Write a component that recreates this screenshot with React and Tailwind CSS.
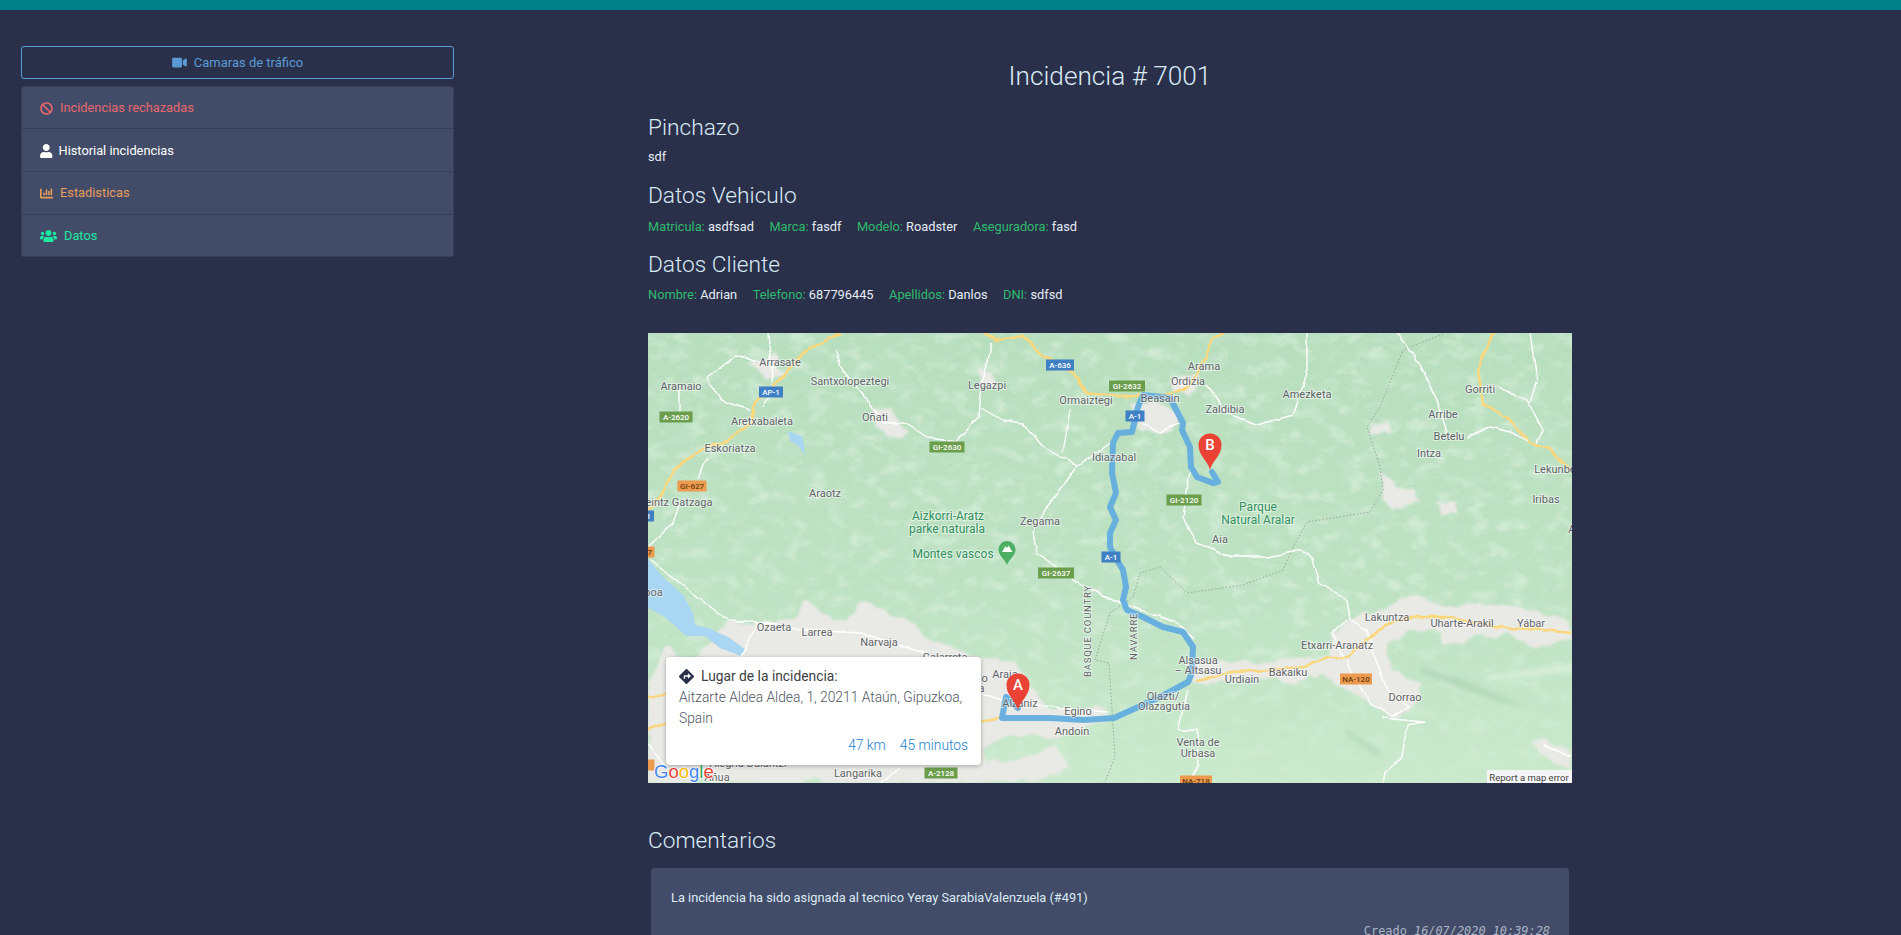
import { FaVideo, FaBan, FaUser, FaChartBar, FaUsers, FaDirections } from 'react-icons/fa';

const yellow = [
  [[192, 0], [155, 20], [132, 47], [105, 70], [105, 87], [79, 109], [52, 117], [29, 134], [12, 164], [0, 177]],
  [[335, 0], [349, 7], [375, 3], [392, 20], [425, 39], [437, 60], [459, 62], [485, 62], [522, 62], [542, 52], [552, 37], [565, 7], [577, 0]],
  [[845, 0], [830, 37], [835, 70], [859, 85], [882, 110], [902, 115], [919, 134], [924, 137]],
  [[924, 300], [895, 297], [845, 294], [799, 284], [762, 284], [735, 294], [719, 307], [699, 324], [679, 324], [655, 334], [620, 337], [589, 339], [549, 347]],
  [[353, 384], [333, 390]],
  [[0, 395], [18, 390]],
  [[0, 364], [18, 362]],
];

const white = [
  [[60, 44], [89, 22], [112, 30], [127, 34]],
  [[60, 44], [72, 67], [102, 77]],
  [[32, 57], [32, 84]],
  [[120, 0], [125, 57], [115, 74]],
  [[187, 17], [192, 34], [219, 67], [235, 90], [255, 90], [282, 105], [309, 109], [330, 84], [332, 60], [344, 10]],
  [[332, 75], [355, 87], [375, 90], [395, 114], [429, 132], [442, 125], [469, 105]],
  [[422, 77], [415, 120]],
  [[429, 132], [399, 174], [385, 200], [389, 220], [429, 249], [440, 255], [472, 270]],
  [[59, 124], [50, 147]],
  [[32, 170], [25, 190], [0, 214]],
  [[27, 247], [57, 270], [80, 287], [110, 289], [153, 297], [213, 300], [267, 317], [280, 322]],
  [[2, 227], [27, 247]],
  [[110, 289], [100, 310], [93, 324]],
  [[333, 360], [353, 367], [413, 375], [460, 379]],
  [[233, 450], [253, 434]],
  [[0, 410], [17, 434]],
  [[542, 137], [535, 184], [549, 210], [585, 224], [619, 224], [655, 217], [665, 227], [672, 250], [699, 267], [702, 287], [719, 297], [725, 320], [740, 357], [762, 375], [745, 382], [725, 372], [709, 350], [699, 327]],
  [[495, 90], [512, 100], [532, 90]],
  [[559, 52], [579, 80], [609, 92], [645, 82], [659, 40], [659, 0]],
  [[749, 0], [765, 20], [789, 67], [799, 100]],
  [[819, 104], [842, 94], [865, 100], [882, 110]],
  [[849, 54], [879, 67], [895, 97], [889, 110]],
  [[882, 0], [889, 47], [882, 70]],
  [[532, 397], [549, 397], [550, 434], [540, 450]],
  [[540, 357], [530, 397]],
  [[734, 385], [777, 389], [759, 392], [754, 424], [737, 440], [735, 450]],
  [[699, 287], [684, 300], [695, 324]],
  [[895, 412], [924, 424]],
  [[472, 270], [530, 290], [545, 307]],
];

const border = [[795, 1], [755, 17], [732, 74], [719, 94], [732, 134], [735, 157], [722, 179], [659, 189], [645, 214], [635, 237], [595, 252], [539, 260], [512, 234], [492, 240], [485, 264], [462, 280], [447, 327], [461, 330], [467, 424], [457, 449]];

const route = [[370, 375], [358, 364], [354, 385], [402, 385], [436, 387], [466, 385], [488, 375], [516, 362], [540, 349], [544, 340], [545, 314], [535, 299], [515, 294], [495, 284], [479, 277], [475, 267], [478, 254], [475, 237], [469, 227], [462, 214], [462, 200], [468, 187], [462, 174], [468, 160], [464, 140], [465, 110], [470, 100], [484, 99], [490, 74], [495, 62], [522, 65], [535, 90], [534, 97], [542, 114], [543, 134], [549, 144], [565, 150], [570, 149], [564, 139]];

const towns = [
  ['Arrasate', 132, 29], ['Aramaio', 33, 53], ['Santxolopeztegi', 202, 48], ['Legazpi', 339, 52], ['Ormaiztegi', 438, 67],
  ['Aretxabaleta', 114, 88], ['Oñati', 227, 84], ['Eskoriatza', 82, 115], ['Idiazabal', 466, 124], ['Araotz', 177, 160],
  ['Zegama', 392, 188], ['Ozaeta', 126, 294], ['Larrea', 169, 299], ['Narvaja', 231, 309], ['Arama', 556, 33],
  ['Ordizia', 540, 48], ['Beasain', 512, 65], ['Zaldibia', 577, 76], ['Amezketa', 659, 61], ['Gorriti', 832, 56],
  ['Arribe', 795, 81], ['Betelu', 801, 103], ['Intza', 781, 120], ['Iribas', 898, 166], ['Aia', 572, 206],
  ['Lakuntza', 739, 284], ['Uharte-Arakil', 814, 290], ['Yábar', 883, 290], ['Etxarri-Aranatz', 689, 312],
  ['Alsasua', 550, 327], ['– Altsasu', 550, 337], ['Bakaiku', 640, 339], ['Urdiain', 594, 346], ['Dorrao', 757, 364],
  ['Olazti/', 515, 363], ['Olazagutía', 516, 373], ['Egino', 430, 378], ['Andoin', 424, 398], ['Venta de', 550, 409],
  ['Urbasa', 550, 420], ['Langarika', 210, 440], ['Añua', 69, 444], ['Alegría-Dulantzi', 100, 430], ['Lekunberri', 912, 136], ['Aldaz', 934, 196],
  ['Leintz Gatzaga', 28, 169], ['Gamboa', -6, 259], ['Araia', 357, 341], ['Alzaniz', 372, 370], ['Galarreta', 297, 324], ['Ilardo', 326, 345], ['Egileta', 320, 355],
];

const parks = [
  ['Aizkorri-Aratz', 300, 183], ['parke naturala', 299, 196], ['Montes vascos', 305, 221],
  ['Parque', 610, 174], ['Natural Aralar', 610, 187],
];

const shields = [
  ['AP-1', 123, 59, 24, '#3f7fc4'], ['A-2620', 28, 84, 33, '#6b9e4c'], ['GI-627', 44, 153, 29, '#ec9a4e'],
  ['A-636', 412, 32, 28, '#3f7fc4'], ['GI-2630', 299, 114, 35, '#6b9e4c'], ['GI-2637', 408, 240, 36, '#6b9e4c'],
  ['A-1', 463, 224, 19, '#3f7fc4'], ['GI-2632', 479, 53, 36, '#6b9e4c'], ['A-1', 487, 83, 19, '#3f7fc4'],
  ['GI-2120', 536, 167, 35, '#6b9e4c'], ['NA-120', 708, 346, 32, '#ec9a4e'], ['NA-718', 548, 448, 32, '#ec9a4e'],
  ['A-2128', 293, 440, 33, '#6b9e4c'], ['AP-1', -6, 183, 24, '#3f7fc4'], ['GI-627', -8, 219, 29, '#ec9a4e'], ['GI-2', -8, 432, 29, '#ec9a4e'],
];

const toPoints = (line) => line.map((p) => p.join(',')).join(' ');

const Pin = ({ x, y, letter }) => (
  <g transform={`translate(${x} ${y})`}>
    <path d="M0 0C-2-9-11.5-14-11.5-25A11.5 11.5 0 1 1 11.5-25C11.5-14 2-9 0 0Z" fill="#ea4335" />
    <text x="0" y="-25" fill="#fff" fontSize="15" fontWeight="500" textAnchor="middle" dominantBaseline="central">{letter}</text>
  </g>
);

const RouteMap = () => (
  <svg width="924" height="450" viewBox="0 0 924 450" className="block" style={{ fontFamily: 'Roboto, sans-serif' }}>
    <defs>
      <filter id="shade" x="0" y="0" width="100%" height="100%">
        <feTurbulence type="fractalNoise" baseFrequency="0.045 0.08" numOctaves="5" seed="11" />
        <feColorMatrix values="0 0 0 0 0.55  0 0 0 0 0.77  0 0 0 0 0.6  4 0 0 0 -1.9" />
        <feGaussianBlur stdDeviation="0.5" />
      </filter>
      <filter id="glow" x="0" y="0" width="100%" height="100%">
        <feTurbulence type="fractalNoise" baseFrequency="0.05 0.07" numOctaves="4" seed="23" />
        <feColorMatrix values="0 0 0 0 0.8  0 0 0 0 0.92  0 0 0 0 0.81  0 3 0 0 -1.5" />
        <feGaussianBlur stdDeviation="0.6" />
      </filter>
      <filter id="rough" x="0" y="0" width="924" height="450" filterUnits="userSpaceOnUse">
        <feTurbulence type="fractalNoise" baseFrequency="0.07" numOctaves="2" seed="4" />
        <feDisplacementMap in="SourceGraphic" scale="5" xChannelSelector="R" yChannelSelector="G" />
        <feGaussianBlur stdDeviation="0.35" />
      </filter>
      <filter id="blotch" x="0" y="0" width="924" height="450" filterUnits="userSpaceOnUse">
        <feTurbulence type="fractalNoise" baseFrequency="0.05" numOctaves="3" seed="9" />
        <feDisplacementMap in="SourceGraphic" scale="14" xChannelSelector="R" yChannelSelector="G" />
        <feGaussianBlur stdDeviation="0.8" />
      </filter>
      <filter id="soft"><feGaussianBlur stdDeviation="2.5" /></filter>
      <linearGradient id="land" x1="0" y1="0" x2="0" y2="1">
        <stop offset="0" stopColor="#b7debd" />
        <stop offset="0.55" stopColor="#bde2c2" />
        <stop offset="1" stopColor="#cbeacd" />
      </linearGradient>
      <linearGradient id="fade" x1="0" y1="0" x2="0" y2="1">
        <stop offset="0" stopColor="#fff" />
        <stop offset="0.6" stopColor="#fff" />
        <stop offset="1" stopColor="#444" />
      </linearGradient>
      <mask id="relief" maskUnits="userSpaceOnUse" x="0" y="0" width="924" height="450">
        <rect width="924" height="450" fill="url(#fade)" />
      </mask>
    </defs>
    <rect width="924" height="450" fill="url(#land)" />
    <g mask="url(#relief)">
      <rect width="924" height="450" filter="url(#shade)" opacity="0.5" />
      <rect width="924" height="450" filter="url(#glow)" opacity="0.45" />
    </g>
    <g fill="#e9e9e5" filter="url(#blotch)">
      <path d="M80 290L110 289L147 290L157 267L173 280L197 290L217 270L240 280L263 290L280 304L317 320L333 327L363 327L390 360L400 374L447 377L460 380L460 390L403 404L350 404L333 414L340 434L407 414L420 434L383 447L317 450H0V347L17 314L43 327Z" />
      <path d="M542 330L575 329L649 325L682 324L685 300L699 287L749 270L762 260L785 270L825 272L859 270L924 290V305L885 314L859 299L815 307L799 314L792 299L762 297L739 307L739 324L745 337L772 350L772 360L762 377L745 384L719 367L692 354L672 340L645 350L622 347L565 350L542 350Z" />
      <path d="M732 140L745 150L765 158L772 172L745 175L735 168Z" />
      <path d="M790 168L805 172L810 185L795 180Z" />
      <path d="M725 92L738 88L742 100L722 102Z" />
      <path d="M100 30L125 22L138 40L120 50Z" />
      <path d="M222 75L245 78L262 100L240 105L228 92Z" />
      <path d="M328 35L345 40L350 55L335 52Z" />
      <path d="M510 70L485 72L492 96L520 100L535 85Z" />
      <path d="M524 45L552 40L545 60L525 60Z" />
      <path d="M885 407L900 405L924 420V436L900 430Z" />
    </g>
    <g fill="#a8d6f3">
      <path d="M0 226L15 244L35 262L45 280L47 292L60 295L80 304L98 317L93 323L72 315L57 303L38 303L17 284L0 275Z" />
      <path d="M140 98L155 104L157 122L150 112L142 108Z" />
    </g>
    <g fill="none" filter="url(#soft)" strokeLinecap="round">
      <path d="M775 337L855 367" stroke="#aed4b6" strokeWidth="5" />
      <path d="M805 345L870 372" stroke="#b3d8ba" strokeWidth="3" />
      <path d="M700 400L730 420" stroke="#b8dcbf" strokeWidth="6" />
      <path d="M840 345L924 335" stroke="#dcefdc" strokeWidth="5" />
    </g>
    <polyline points={toPoints(border)} fill="none" stroke="#9aa6a0" strokeWidth="1" strokeDasharray="1.5 2" />
    <g filter="url(#rough)" fill="none" strokeLinejoin="round">
      {white.map((line, i) => (
        <polyline key={i} points={toPoints(line)} stroke="#fff" strokeWidth="1.4" />
      ))}
      {yellow.map((line, i) => (
        <polyline key={i} points={toPoints(line)} stroke="#fbd77e" strokeWidth="2.6" />
      ))}
    </g>
    <polyline points={toPoints(route)} fill="none" stroke="#5fabe0" strokeWidth="6" strokeLinejoin="round" strokeLinecap="round" opacity="0.92" />
    <g fontSize="11" fill="#5f6368" stroke="#fff" strokeWidth="2" strokeOpacity="0.55" textAnchor="middle" dominantBaseline="central" style={{ paintOrder: 'stroke' }}>
      {towns.map(([t, x, y]) => <text key={t} x={x} y={y}>{t}</text>)}
      <text x="439" y="344" fontSize="9.5" letterSpacing="0.8" transform="rotate(-90 439 344)" textAnchor="start">BASQUE COUNTRY</text>
      <text x="485" y="327" fontSize="9.5" letterSpacing="0.8" transform="rotate(-90 485 327)" textAnchor="start">NAVARRE</text>
    </g>
    <g fontSize="12" fill="#2f8f5b" stroke="#fff" strokeWidth="2" strokeOpacity="0.5" textAnchor="middle" dominantBaseline="central" style={{ paintOrder: 'stroke' }}>
      {parks.map(([t, x, y]) => <text key={t} x={x} y={y}>{t}</text>)}
    </g>
    {shields.map(([t, x, y, w, c]) => (
      <g key={t + x}>
        <rect x={x - w / 2} y={y - 5.5} width={w} height="11" fill={c} />
        <text x={x} y={y} fontSize="8" fontWeight="500" fill={c === '#ec9a4e' ? '#6b3d12' : '#fff'} textAnchor="middle" dominantBaseline="central">{t}</text>
      </g>
    ))}
    <g transform="translate(359 232)">
      <path d="M0 0C-2-6-8.5-9-8.5-15.5A8.5 8.5 0 1 1 8.5-15.5C8.5-9 2-6 0 0Z" fill="#4caf63" />
      <path d="M-5-13L-1.5-19L0-17L1.5-19.5L5.5-13Z" fill="#fff" />
    </g>
    <Pin x={370} y={377} letter="A" />
    <Pin x={562} y={137} letter="B" />
    <text x="6" y="438" fontSize="18.5" fontWeight="400" stroke="#fff" strokeWidth="1.5" dominantBaseline="central" style={{ fontFamily: '"Liberation Sans", sans-serif', paintOrder: 'stroke' }}>
      <tspan fill="#4285f4">G</tspan><tspan fill="#ea4335">o</tspan><tspan fill="#fbbc05">o</tspan><tspan fill="#4285f4">g</tspan><tspan fill="#34a853">l</tspan><tspan fill="#ea4335">e</tspan>
    </text>
    <rect x="839" y="437" width="85" height="13" fill="#f5f5f5" />
    <text x="881" y="444" fontSize="9.5" fill="#444" textAnchor="middle" dominantBaseline="central">Report a map error</text>
  </svg>
);

const menu = [
  { icon: FaBan, label: 'Incidencias rechazadas', color: 'text-[#e8686c]', size: 'h-[13px] w-[13px]', row: 'h-[41px] gap-[7px] pt-[1px]' },
  { icon: FaUser, label: 'Historial incidencias', color: 'text-white', size: 'h-[14px] w-[12.5px]', row: 'h-[43px] gap-[6px] border-t border-[#383f5b] pt-[1px]' },
  { icon: FaChartBar, label: 'Estadisticas', color: 'text-[#e99b5c]', size: 'h-[13px] w-[13px]', row: 'h-[43px] gap-[7px] border-t border-[#383f5b]' },
  { icon: FaUsers, label: 'Datos', color: 'text-[#1de9a0]', size: 'h-[14px] w-[17px]', row: 'h-[42px] gap-[7px] border-t border-[#383f5b]' },
];

const Field = ({ name, value }) => (
  <span className="mr-[15.5px]"><span className="text-[#2fbb6d]">{name}:</span> <span className="text-[#e6edf5]">{value}</span></span>
);

export default function App() {
  return (
    <div className="h-[935px] overflow-hidden bg-[#2a304a] text-[12.8px] text-[#e6edf5]" style={{ fontFamily: 'Roboto, sans-serif' }}>
      <div className="h-[10px] bg-[#008088]" />
      <div className="flex">
        <aside className="w-[648px] shrink-0 pl-[21px] pr-[194px] pt-[36px]">
          <button className="flex h-[33px] w-full items-center justify-center gap-[7px] rounded-[3px] border border-[#5b9bd5] text-[13px] text-[#5b9bd5]">
            <FaVideo className="h-[13px] w-[15px]" />
            <span>Camaras de tráfico</span>
          </button>
          <div className="mt-[7px] overflow-hidden rounded-[3px] border border-[#383f59] bg-[#424c68]">
            {menu.map((item) => {
              const Icon = item.icon;
              return (
                <div key={item.label} className={`flex items-center px-[18px] ${item.row} ${item.color}`}>
                  <Icon className={item.size} />
                  <span>{item.label}</span>
                </div>
              );
            })}
          </div>
        </aside>
        <main className="w-[924px] shrink-0">
          <h1 className="mt-[49px] text-center text-[26.2px] leading-[34px] font-light text-[#d9eaf5]">Incidencia # 7001</h1>
          <h2 className="mt-[20px] text-[22.7px] leading-[29px] font-light text-[#d9eaf5]">Pinchazo</h2>
          <p className="mt-[5px] leading-[20px]">sdf</p>
          <h2 className="mt-[14px] text-[22.7px] leading-[29px] font-light text-[#d9eaf5]">Datos Vehiculo</h2>
          <p className="mt-[7px] leading-[20px]">
            <Field name="Matricula" value="asdfsad" />
            <Field name="Marca" value="fasdf" />
            <Field name="Modelo" value="Roadster" />
            <Field name="Aseguradora" value="fasd" />
          </p>
          <h2 className="mt-[13px] text-[22.7px] leading-[29px] font-light text-[#d9eaf5]">Datos Cliente</h2>
          <p className="mt-[6px] leading-[20px]">
            <Field name="Nombre" value="Adrian" />
            <Field name="Telefono" value="687796445" />
            <Field name="Apellidos" value="Danlos" />
            <Field name="DNI" value="sdfsd" />
          </p>
          <div className="relative mt-[28px] h-[450px] w-[924px] overflow-hidden">
            <RouteMap />
            <div className="absolute top-[324px] left-[18px] h-[108px] w-[315px] rounded-[4px] bg-white px-[13px] pt-[9px] text-[13.8px] leading-[21px] text-[#4f5563] shadow-[0_1px_4px_rgba(0,0,0,0.3)]">
              <div className="flex items-center gap-[7px] text-[#3c4043]">
                <FaDirections className="size-[15px] text-[#2a304a]" />
                <span>Lugar de la incidencia:</span>
              </div>
              <div className="font-light">Aitzarte Aldea Aldea, 1, 20211 Ataún, Gipuzkoa, Spain</div>
              <div className="mt-[6px] flex justify-end gap-[14px] font-light text-[#1a7fd0]">
                <span>47 km</span>
                <span>45 minutos</span>
              </div>
            </div>
          </div>
          <h2 className="mt-[43px] text-[22.7px] leading-[29px] font-light text-[#d9eaf5]">Comentarios</h2>
          <div className="mx-[3px] mt-[13px] h-[120px] rounded-[3px] bg-[#424c68] pr-[19px] pl-[20px] pt-[20px]">
            <p className="leading-[20px] text-[#dcebf5]">La incidencia ha sido asignada al tecnico Yeray SarabiaValenzuela (#491)</p>
            <p className="mt-[13px] text-right text-[11.9px] leading-[20px] text-[#aab4c4]" style={{ fontFamily: '"DejaVu Sans Mono", monospace' }}>Creado <i>16/07/2020 10:39:28</i></p>
          </div>
        </main>
      </div>
    </div>
  );
}
